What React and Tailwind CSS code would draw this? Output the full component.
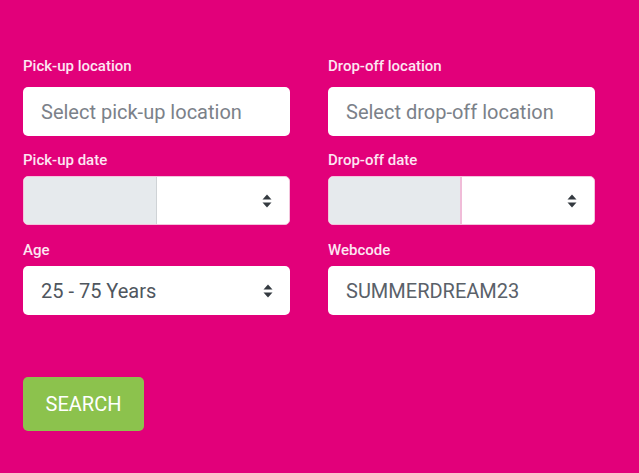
import React from "react";

function Arrows() {
  return (
    <svg width="10" height="14" viewBox="0 0 10 14" className="shrink-0">
      <path d="M5 0.5 L9.5 5.5 L0.5 5.5 Z" fill="#343a40" />
      <path d="M5 13.5 L9.5 8.5 L0.5 8.5 Z" fill="#343a40" />
    </svg>
  );
}

function Label({ children, className = "" }) {
  return (
    <div className={"text-[15px] leading-[20px] font-medium text-[#fde6f2] " + className}>
      {children}
    </div>
  );
}

function TextBox({ children, color = "text-[#7b8189]" }) {
  return (
    <div className={"h-[49px] bg-white rounded-[5px] flex items-center pl-[18px] text-[20px] " + color}>
      {children}
    </div>
  );
}

function DateBox({ pinkGap }) {
  return (
    <div className="h-[49px] bg-white rounded-[5px] border border-[#f3c4dc] flex overflow-hidden">
      <div
        className={
          "w-[133px] bg-[#e6eaed] " +
          (pinkGap ? "border-r-2 border-[#f0bcd8]" : "border-r border-[#cfd3d6]")
        }
      />
      <div className="flex-1 flex items-center justify-end pr-[17px]">
        <Arrows />
      </div>
    </div>
  );
}

export default function App() {
  return (
    <div
      className="w-[639px] h-[473px] bg-[#e2007a] pt-[56px] px-[23px]"
      style={{ fontFamily: "Roboto, 'Liberation Sans', sans-serif" }}
    >
      <div className="w-[572px] grid grid-cols-2 gap-x-[38px]">
        <div>
          <Label className="mb-[11px]">Pick-up location</Label>
          <TextBox>Select pick-up location</TextBox>
        </div>
        <div>
          <Label className="mb-[11px]">Drop-off location</Label>
          <TextBox>Select drop-off location</TextBox>
        </div>

        <div className="mt-[14px]">
          <Label className="mb-[6px]">Pick-up date</Label>
          <DateBox />
        </div>
        <div className="mt-[14px]">
          <Label className="mb-[6px]">Drop-off date</Label>
          <DateBox pinkGap />
        </div>

        <div className="mt-[15px]">
          <Label className="mb-[6px]">Age</Label>
          <div className="h-[49px] bg-white rounded-[5px] flex items-center justify-between pl-[18px] pr-[17px] text-[20px] text-[#4f565e]">
            <span>25 - 75 Years</span>
            <Arrows />
          </div>
        </div>
        <div className="mt-[15px]">
          <Label className="mb-[6px]">Webcode</Label>
          <TextBox color="text-[#5a6169]">SUMMERDREAM23</TextBox>
        </div>
      </div>

      <button className="mt-[62px] w-[121px] h-[54px] rounded-[5px] bg-[#8cc24d] text-white text-[20px] flex items-center justify-center">
        SEARCH
      </button>
    </div>
  );
}
